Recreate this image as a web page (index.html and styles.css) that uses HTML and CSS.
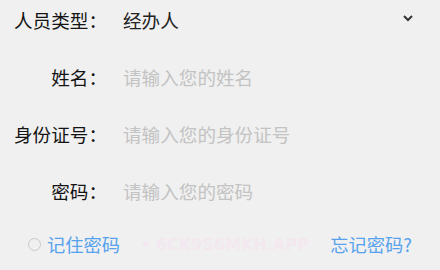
FILE: index.html
```html
<!DOCTYPE html>
<html lang="zh-CN">
<head>
<meta charset="utf-8">
<link rel="stylesheet" href="styles.css">
</head>
<body>
<div class="form">
  <div class="row">
    <span class="label">人员类型：</span>
    <span class="value">经办人</span>
    <svg class="chev" width="12" height="8" viewBox="0 0 12 8"><path d="M2 2 L6 6 L10 2" fill="none" stroke="#333" stroke-width="2"/></svg>
  </div>
  <div class="row">
    <span class="label">姓名：</span>
    <span class="ph">请输入您的姓名</span>
  </div>
  <div class="row">
    <span class="label">身份证号：</span>
    <span class="ph">请输入您的身份证号</span>
  </div>
  <div class="row">
    <span class="label">密码：</span>
    <span class="ph">请输入您的密码</span>
  </div>
  <div class="footer">
    <span class="radio"></span>
    <span class="link">记住密码</span>
    <span class="mark">• 6CK9S6MKH.APP</span>
    <span class="link">忘记密码?</span>
  </div>
</div>
</body>
</html>
```
FILE: styles.css
```css
html, body {
  margin: 0;
  padding: 0;
  background: #f0f0f0;
}
body {
  width: 440px;
  height: 270px;
  overflow: hidden;
  font-family: "Noto Sans CJK SC", "Noto Sans", sans-serif;
  font-size: 18.6px;
}
.form {
  display: flex;
  flex-direction: column;
  gap: 19px;
  padding: 0 28px 0 12px;
}
.row {
  display: flex;
  align-items: center;
  height: 38px;
}
.label {
  width: 95px;
  text-align: right;
  color: #141414;
  margin-right: 16px;
}
.value {
  color: #222;
  flex: 1;
}
.ph {
  color: #c3c3c3;
}
.chev {
  display: block;
  margin-top: -2px;
  margin-right: -2px;
}
.footer {
  display: flex;
  align-items: center;
  height: 32px;
  padding-left: 16px;
  font-size: 18.3px;
}
.radio {
  width: 11px;
  height: 11px;
  border: 1.5px solid #c8c8c8;
  border-radius: 50%;
  margin-right: 6px;
}
.link {
  color: #56a2ee;
}
.mark {
  flex: 1;
  color: #f3e8ef;
  font-family: "DejaVu Sans", sans-serif;
  font-weight: bold;
  font-size: 16px;
  padding-left: 20px;
}
```
